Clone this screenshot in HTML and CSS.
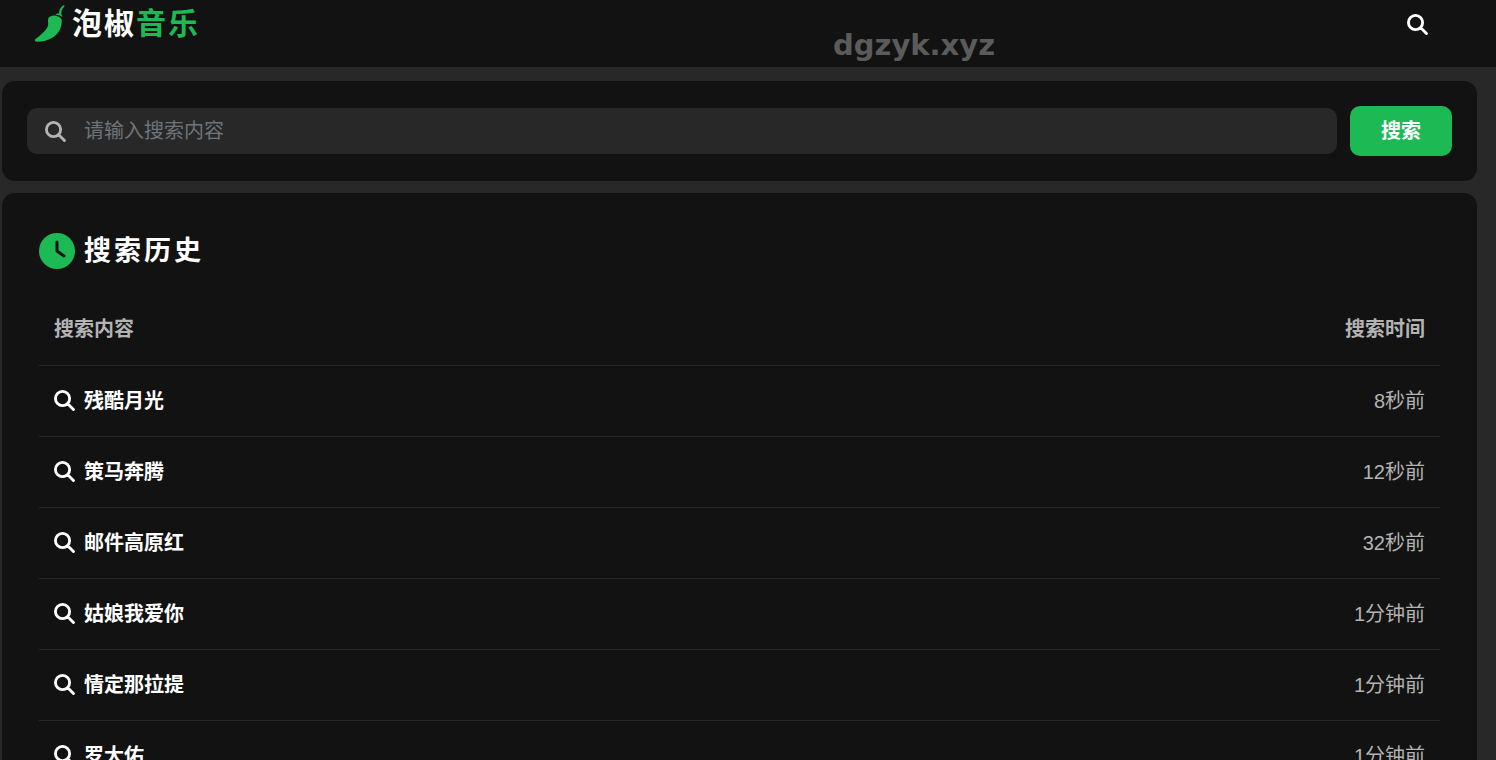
FILE: index.html
```
<!DOCTYPE html>
<html lang="zh-CN">
<head>
<meta charset="utf-8">
<meta name="viewport" content="width=device-width, initial-scale=1">
<title>泡椒音乐</title>
<link rel="stylesheet" href="styles.css">
</head>
<body>
<svg class="sprite" aria-hidden="true">
  <symbol id="search" viewBox="0 0 512 512"><path fill="none" stroke="currentColor" stroke-width="70" stroke-linecap="round" d="M381 208a173 173 0 1 1-346 0a173 173 0 1 1 346 0zM335 335L474 474"/></symbol>
</svg>
<header class="topbar">
  <a class="brand" href="#">
    <svg class="brand-icon" viewBox="12 12 93 114" aria-hidden="true">
      <path d="M101 13c3 0 3 3 1 5c-6 6-9 13-8 22c2 2 3 5 3 9c-6-6-12-8-21-6c2-4 6-6 11-5c0-11 4-20 14-25z"/>
      <path d="M54 62c-1-9 2-15 9-16c4-3 10-3 15-1c7 0 13 4 17 10c2 17-5 36-18 48c-14 12-34 19-53 19c-8 0-11-3-9-6c2-4 8-7 14-12c10-9 19-16 23-25c3-6 3-11 2-17z"/>
    </svg>
    <span class="brand-name">泡椒<span class="brand-accent">音乐</span></span>
  </a>
  <span class="site-mark">dgzyk.xyz</span>
  <button class="icon-button" type="button" aria-label="搜索"><svg class="icon"><use href="#search"/></svg></button>
</header>
<main class="content">
  <form class="card search-form">
    <label class="search-field">
      <svg class="icon" aria-hidden="true"><use href="#search"/></svg>
      <input class="search-input" type="text" placeholder="请输入搜索内容" aria-label="请输入搜索内容">
    </label>
    <button class="search-button" type="submit">搜索</button>
  </form>
  <section class="card history">
    <h1 class="history-title">
      <svg class="clock" viewBox="0 0 36 36" aria-hidden="true"><circle cx="18" cy="18" r="18"/><path d="M18 9v9l7 5"/></svg>
      <span>搜索历史</span>
    </h1>
    <table class="history-table">
      <thead><tr><th>搜索内容</th><th>搜索时间</th></tr></thead>
      <tbody>
        <tr><td><a class="term" href="#"><svg class="icon"><use href="#search"/></svg>残酷月光</a></td><td>8秒前</td></tr>
        <tr><td><a class="term" href="#"><svg class="icon"><use href="#search"/></svg>策马奔腾</a></td><td>12秒前</td></tr>
        <tr><td><a class="term" href="#"><svg class="icon"><use href="#search"/></svg>邮件高原红</a></td><td>32秒前</td></tr>
        <tr><td><a class="term" href="#"><svg class="icon"><use href="#search"/></svg>姑娘我爱你</a></td><td>1分钟前</td></tr>
        <tr><td><a class="term" href="#"><svg class="icon"><use href="#search"/></svg>情定那拉提</a></td><td>1分钟前</td></tr>
        <tr><td><a class="term" href="#"><svg class="icon"><use href="#search"/></svg>罗大佑</a></td><td>1分钟前</td></tr>
      </tbody>
    </table>
  </section>
</main>
</body>
</html>
```
FILE: styles.css
```
* { box-sizing: border-box; }
html { scrollbar-width: none; }
body {
  margin: 0;
  background: #282828;
  color: #fff;
  font: 20px/30px "Liberation Sans", "Noto Sans CJK SC", sans-serif;
}
a { color: inherit; text-decoration: none; }
button, input { font: inherit; color: inherit; border: 0; }
.sprite { display: none; }
.icon { width: 21px; height: 21px; flex: none; display: block; }

.topbar {
  position: relative;
  display: flex;
  justify-content: space-between;
  align-items: flex-start;
  padding: 4px 68px 23px 34px;
  background: #121212;
}
.brand { display: flex; align-items: center; gap: 7px; height: 40px; }
.brand-icon { width: 31px; height: 38px; fill: #1db954; }
.brand-name { font-size: 30px; line-height: 40px; font-weight: 700; letter-spacing: 2px; }
.brand-accent { color: #1db954; }
.site-mark {
  position: absolute;
  left: 833px;
  top: 25px;
  color: #5b5b5b;
  font: 700 29px/40px "DejaVu Sans", sans-serif;
}
.icon-button { padding: 10px 0 0; background: none; cursor: pointer; }

.content {
  display: flex;
  flex-direction: column;
  gap: 12px;
  padding: 14px 19px 12px 2px;
}
.card { background: #121212; border-radius: 13px; }
.search-form { display: flex; align-items: center; gap: 13px; padding: 25px; }
.search-field {
  flex: 1;
  display: flex;
  align-items: center;
  gap: 18px;
  height: 46px;
  padding: 0 18px;
  border-radius: 10px;
  background: #282828;
  color: #b3b3b3;
}
.search-input { flex: 1; min-width: 0; height: 30px; padding: 0; background: none; outline: 0; }
.search-input::placeholder { color: #6c757d; opacity: 1; }
.search-button {
  width: 102px;
  height: 50px;
  border-radius: 10px;
  background: #1db954;
  color: #fff;
  font-weight: 700;
  cursor: pointer;
}

.history { padding: 39px 37px; }
.history-title {
  display: flex;
  align-items: center;
  gap: 9px;
  margin: 0 0 24px;
  font-size: 27px;
  line-height: 38px;
  letter-spacing: 3px;
}
.clock { width: 36px; height: 36px; fill: #1db954; }
.clock path { fill: none; stroke: #121212; stroke-width: 3; stroke-linecap: round; stroke-linejoin: round; }
.history-table { width: 100%; border-collapse: collapse; color: #b3b3b3; }
.history-table th, .history-table td {
  height: 71px;
  padding: 0 15px;
  border-bottom: 1px solid #282828;
  text-align: left;
}
.history-table th:last-child, .history-table td:last-child { text-align: right; }
.term { display: flex; align-items: center; gap: 9px; color: #fff; font-weight: 700; }
```
